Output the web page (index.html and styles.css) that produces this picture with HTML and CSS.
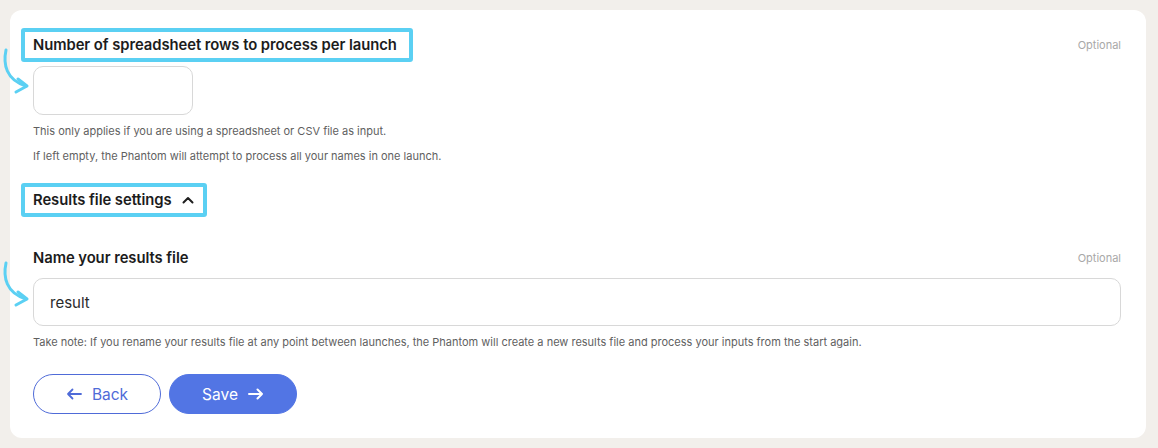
FILE: index.html
```html
<!DOCTYPE html>
<html lang="en">
<head>
<meta charset="utf-8">
<title>Phantom settings</title>
<link rel="stylesheet" href="styles.css">
</head>
<body>
<main class="card">
  <section class="field">
    <div class="field-head">
      <h3 class="label highlight">Number of spreadsheet rows to process per launch</h3>
      <span class="optional">Optional</span>
    </div>
    <div class="input-wrap">
      <svg class="pointer pointer-1" width="36" height="48" viewBox="0 0 36 48" aria-hidden="true">
        <path d="M6 2 C3 16, 6 32, 26 38" fill="none" stroke="#5bd0f3" stroke-width="3" stroke-linecap="round"/>
        <path d="M18 31 L27 38 L16 44" fill="none" stroke="#5bd0f3" stroke-width="3" stroke-linecap="round" stroke-linejoin="round"/>
      </svg>
      <input class="input input-small" type="text">
    </div>
    <p class="help help-first">This only applies if you are using a spreadsheet or CSV file as input.</p>
    <p class="help help-second">If left empty, the Phantom will attempt to process all your names in one launch.</p>
  </section>

  <button class="toggle highlight" type="button">
    <span>Results file settings</span>
    <svg width="12" height="8" viewBox="0 0 12 8" aria-hidden="true"><path d="M1.5 6.5 L6 2 L10.5 6.5" fill="none" stroke="#1f1f1f" stroke-width="2" stroke-linecap="round" stroke-linejoin="round"/></svg>
  </button>

  <section class="field field-two">
    <div class="field-head">
      <h3 class="label">Name your results file</h3>
      <span class="optional">Optional</span>
    </div>
    <div class="input-wrap">
      <svg class="pointer pointer-2" width="36" height="48" viewBox="0 0 36 48" aria-hidden="true">
        <path d="M6 2 C3 16, 6 32, 26 38" fill="none" stroke="#5bd0f3" stroke-width="3" stroke-linecap="round"/>
        <path d="M18 31 L27 38 L16 44" fill="none" stroke="#5bd0f3" stroke-width="3" stroke-linecap="round" stroke-linejoin="round"/>
      </svg>
      <input class="input input-full" type="text" value="result">
    </div>
    <p class="help help-first">Take note: If you rename your results file at any point between launches, the Phantom will create a new results file and process your inputs from the start again.</p>
  </section>

  <div class="actions">
    <button class="btn btn-back" type="button">
      <svg width="16" height="12" viewBox="0 0 16 12" aria-hidden="true"><path d="M15 6 H2 M6.5 1.5 L2 6 L6.5 10.5" fill="none" stroke="currentColor" stroke-width="1.8" stroke-linecap="round" stroke-linejoin="round"/></svg>
      <span>Back</span>
    </button>
    <button class="btn btn-save" type="button">
      <span>Save</span>
      <svg width="16" height="12" viewBox="0 0 16 12" aria-hidden="true"><path d="M1 6 H14 M9.5 1.5 L14 6 L9.5 10.5" fill="none" stroke="currentColor" stroke-width="2" stroke-linecap="round" stroke-linejoin="round"/></svg>
    </button>
  </div>
</main>
</body>
</html>
```

FILE: styles.css
```css
* { box-sizing: border-box; }

html, body {
  margin: 0;
  padding: 0;
}

body {
  background: #f2efeb;
  padding: 10px 12px 11px 10px;
  font-family: Inter, "Noto Sans", "Liberation Sans", sans-serif;
  color: #1f1f1f;
  height: 448px;
}

.card {
  background: #ffffff;
  border-radius: 12px;
  padding: 18px 25px 24px 23px;
  display: flex;
  flex-direction: column;
  align-items: flex-start;
}

.field {
  width: 100%;
  display: flex;
  flex-direction: column;
  align-items: flex-start;
}

.field-head {
  width: 100%;
  display: flex;
  justify-content: space-between;
  align-items: center;
}

.label {
  margin: 0;
  font-size: 14.8px;
  font-weight: 600;
  line-height: 20px;
  color: #1c1c1c;
  letter-spacing: -0.05px;
}

.highlight {
  border: 4px solid #5bd0f3;
  border-radius: 3px;
  padding: 3px 12px 3px 8px;
  margin-left: -12px;
}

.optional {
  font-size: 11px;
  color: #a8a8a8;
  line-height: 14px;
}

.input-wrap {
  position: relative;
  width: 100%;
}

.pointer {
  position: absolute;
  left: -33px;
}

.pointer-1 { top: -14px; }
.pointer-2 { top: -7px; }

.input {
  display: block;
  border: 1px solid #d8d8d8;
  border-radius: 10px;
  background: #fff;
  font-family: inherit;
  font-size: 15px;
  color: #2a2a2a;
  padding: 0 16px;
  outline: none;
}

.input-small {
  margin-top: 4px;
  width: 160px;
  height: 49px;
}

.input-full {
  margin-top: 10px;
  width: 100%;
  height: 48px;
}

.help {
  margin: 0;
  font-size: 11px;
  line-height: 16px;
  color: #5f5f5f;
}

.help-first { margin-top: 8px; }
.help-second { margin-top: 9px; }

.toggle {
  margin-top: 19px;
  background: #fff;
  font-family: inherit;
  font-size: 14.8px;
  font-weight: 600;
  color: #1c1c1c;
  line-height: 20px;
  display: flex;
  align-items: center;
  gap: 10px;
  padding: 3px 9px 3px 8px;
  cursor: pointer;
  letter-spacing: -0.05px;
}

.field-two { margin-top: 31px; }

.actions {
  margin-top: 24px;
  display: flex;
  gap: 8px;
}

.btn {
  height: 40px;
  width: 128px;
  border-radius: 20px;
  font-family: inherit;
  font-size: 15.5px;
  font-weight: 400;
  display: flex;
  align-items: center;
  justify-content: center;
  gap: 10px;
  cursor: pointer;
}

.btn-back {
  background: #fff;
  border: 1px solid #4f6bd8;
  color: #4f6bd8;
  width: 128px;
}

.btn-save {
  background: #5275e4;
  border: 1px solid #5275e4;
  color: #fff;
}
```
